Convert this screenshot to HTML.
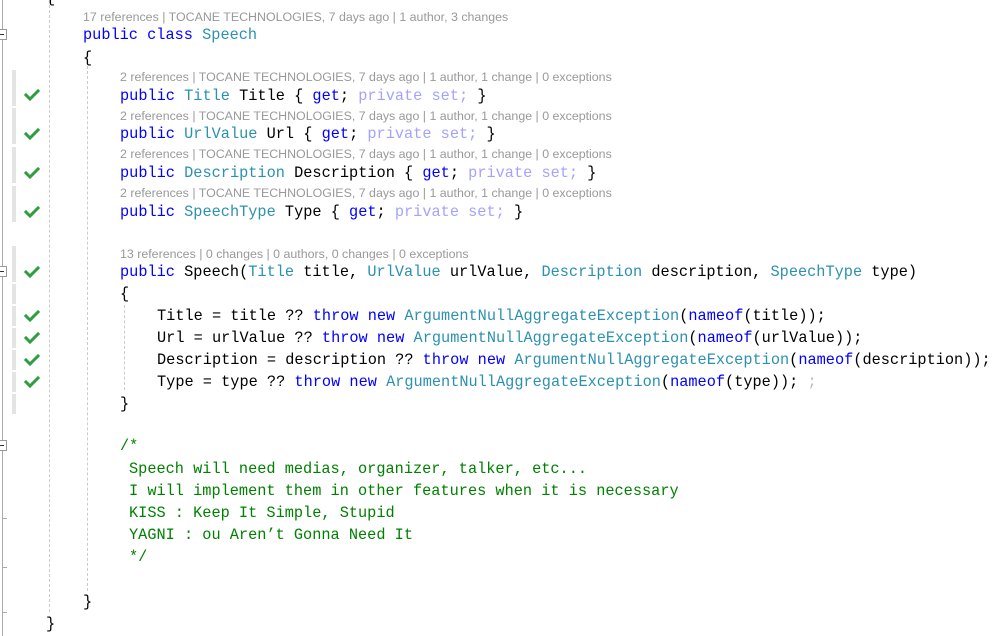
<!DOCTYPE html><html><head><style>
body{margin:0;width:1000px;height:636px;background:#fff;position:relative;overflow:hidden}
.c{position:absolute;font-family:"Liberation Mono",monospace;font-size:15.27px;line-height:20px;white-space:pre;color:#000}
.l{position:absolute;font-family:"Liberation Sans",sans-serif;font-size:12.4px;line-height:16px;white-space:pre;color:#999}
.k{color:#0000ff}.t{color:#2b91af}.p{color:#a3a3ff}.g{color:#008000}.s{color:#bbb}
.bar{position:absolute;left:12px;width:4px;background:#e4e4e4}
.box{position:absolute;left:-4px;width:9px;height:9px;border:1px solid #999;background:#fff}
.box:after{content:"";position:absolute;left:2px;top:4px;width:5px;height:1px;background:#333}
.vg{position:absolute;width:0;border-left:1px dashed #ccc}
</style></head><body>
<div style="position:absolute;left:2px;top:0;width:1px;height:636px;background:#aaa"></div>
<div style="position:absolute;left:2px;top:567px;width:5px;height:1px;background:#aaa"></div>
<div style="position:absolute;left:2px;top:612px;width:5px;height:1px;background:#aaa"></div>
<div style="position:absolute;left:2px;top:518px;width:5px;height:1px;background:#aaa"></div>
<div class="box" style="top:29px"></div>
<div class="box" style="top:266px"></div>
<div class="box" style="top:440px"></div>
<div class="vg" style="left:49px;top:0;height:612px"></div>
<div class="vg" style="left:87px;top:66px;height:525px"></div>
<div class="vg" style="left:124px;top:305px;height:85px"></div>
<div class="bar" style="top:70px;height:36px"></div>
<div class="bar" style="top:108px;height:36px"></div>
<div class="bar" style="top:147px;height:36px"></div>
<div class="bar" style="top:186px;height:36px"></div>
<div class="bar" style="top:246px;height:36px"></div>
<div class="bar" style="top:284px;height:20px"></div>
<div class="bar" style="top:306px;height:20px"></div>
<div class="bar" style="top:328px;height:20px"></div>
<div class="bar" style="top:350px;height:20px"></div>
<div class="bar" style="top:372px;height:20px"></div>
<div class="bar" style="top:394px;height:20px"></div>
<svg style="position:absolute;left:0;top:0" width="60" height="636">
<g fill="none" stroke="#2e9e3e" stroke-width="3" stroke-linecap="square">
<path d="M26 95l4 4 8-8"/><path d="M26 134l4 4 8-8"/><path d="M26 173l4 4 8-8"/><path d="M26 212l4 4 8-8"/>
<path d="M26 272l4 4 8-8"/><path d="M26 316l4 4 8-8"/><path d="M26 338l4 4 8-8"/><path d="M26 360l4 4 8-8"/><path d="M26 382l4 4 8-8"/>
</g></svg>
<div class="l" style="left:83px;top:9px">17 references | TOCANE TECHNOLOGIES, 7 days ago | 1 author, 3 changes</div>
<div class="c" style="left:83px;top:25px"><span class="k">public</span> <span class="k">class</span> <span class="t">Speech</span></div>
<div class="c" style="left:83px;top:48px">{</div>
<div class="l" style="left:120px;top:69px">2 references | TOCANE TECHNOLOGIES, 7 days ago | 1 author, 1 change | 0 exceptions</div>
<div class="c" style="left:120px;top:86px"><span class="k">public</span> <span class="t">Title</span> Title { <span class="k">get</span>; <span class="p">private set;</span> }</div>
<div class="l" style="left:120px;top:108px">2 references | TOCANE TECHNOLOGIES, 7 days ago | 1 author, 1 change | 0 exceptions</div>
<div class="c" style="left:120px;top:124px"><span class="k">public</span> <span class="t">UrlValue</span> Url { <span class="k">get</span>; <span class="p">private set;</span> }</div>
<div class="l" style="left:120px;top:146px">2 references | TOCANE TECHNOLOGIES, 7 days ago | 1 author, 1 change | 0 exceptions</div>
<div class="c" style="left:120px;top:163px"><span class="k">public</span> <span class="t">Description</span> Description { <span class="k">get</span>; <span class="p">private set;</span> }</div>
<div class="l" style="left:120px;top:185px">2 references | TOCANE TECHNOLOGIES, 7 days ago | 1 author, 1 change | 0 exceptions</div>
<div class="c" style="left:120px;top:202px"><span class="k">public</span> <span class="t">SpeechType</span> Type { <span class="k">get</span>; <span class="p">private set;</span> }</div>
<div class="l" style="left:120px;top:246px">13 references | 0 changes | 0 authors, 0 changes | 0 exceptions</div>
<div class="c" style="left:120px;top:262px"><span class="k">public</span> Speech(<span class="t">Title</span> title, <span class="t">UrlValue</span> urlValue, <span class="t">Description</span> description, <span class="t">SpeechType</span> type)</div>
<div class="c" style="left:120px;top:284px">{</div>
<div class="c" style="left:157px;top:306px">Title = title ?? <span class="k">throw</span> <span class="k">new</span> <span class="t">ArgumentNullAggregateException</span>(<span class="k">nameof</span>(title));</div>
<div class="c" style="left:157px;top:328px">Url = urlValue ?? <span class="k">throw</span> <span class="k">new</span> <span class="t">ArgumentNullAggregateException</span>(<span class="k">nameof</span>(urlValue));</div>
<div class="c" style="left:157px;top:350px">Description = description ?? <span class="k">throw</span> <span class="k">new</span> <span class="t">ArgumentNullAggregateException</span>(<span class="k">nameof</span>(description));</div>
<div class="c" style="left:157px;top:372px">Type = type ?? <span class="k">throw</span> <span class="k">new</span> <span class="t">ArgumentNullAggregateException</span>(<span class="k">nameof</span>(type)); <span class="s">;</span></div>
<div class="c" style="left:120px;top:394px">}</div>
<div class="c g" style="left:120px;top:436px">/*</div>
<div class="c g" style="left:129px;top:459px">Speech will need medias, organizer, talker, etc...</div>
<div class="c g" style="left:129px;top:481px">I will implement them in other features when it is necessary</div>
<div class="c g" style="left:129px;top:503px">KISS : Keep It Simple, Stupid</div>
<div class="c g" style="left:129px;top:525px">YAGNI : ou Aren’t Gonna Need It</div>
<div class="c g" style="left:129px;top:547px">*/</div>
<div class="c" style="left:83px;top:592px">}</div>
<div class="c" style="left:46px;top:614px">}</div>
<div class="c" style="left:46px;top:-12px">{</div>
</body></html>
